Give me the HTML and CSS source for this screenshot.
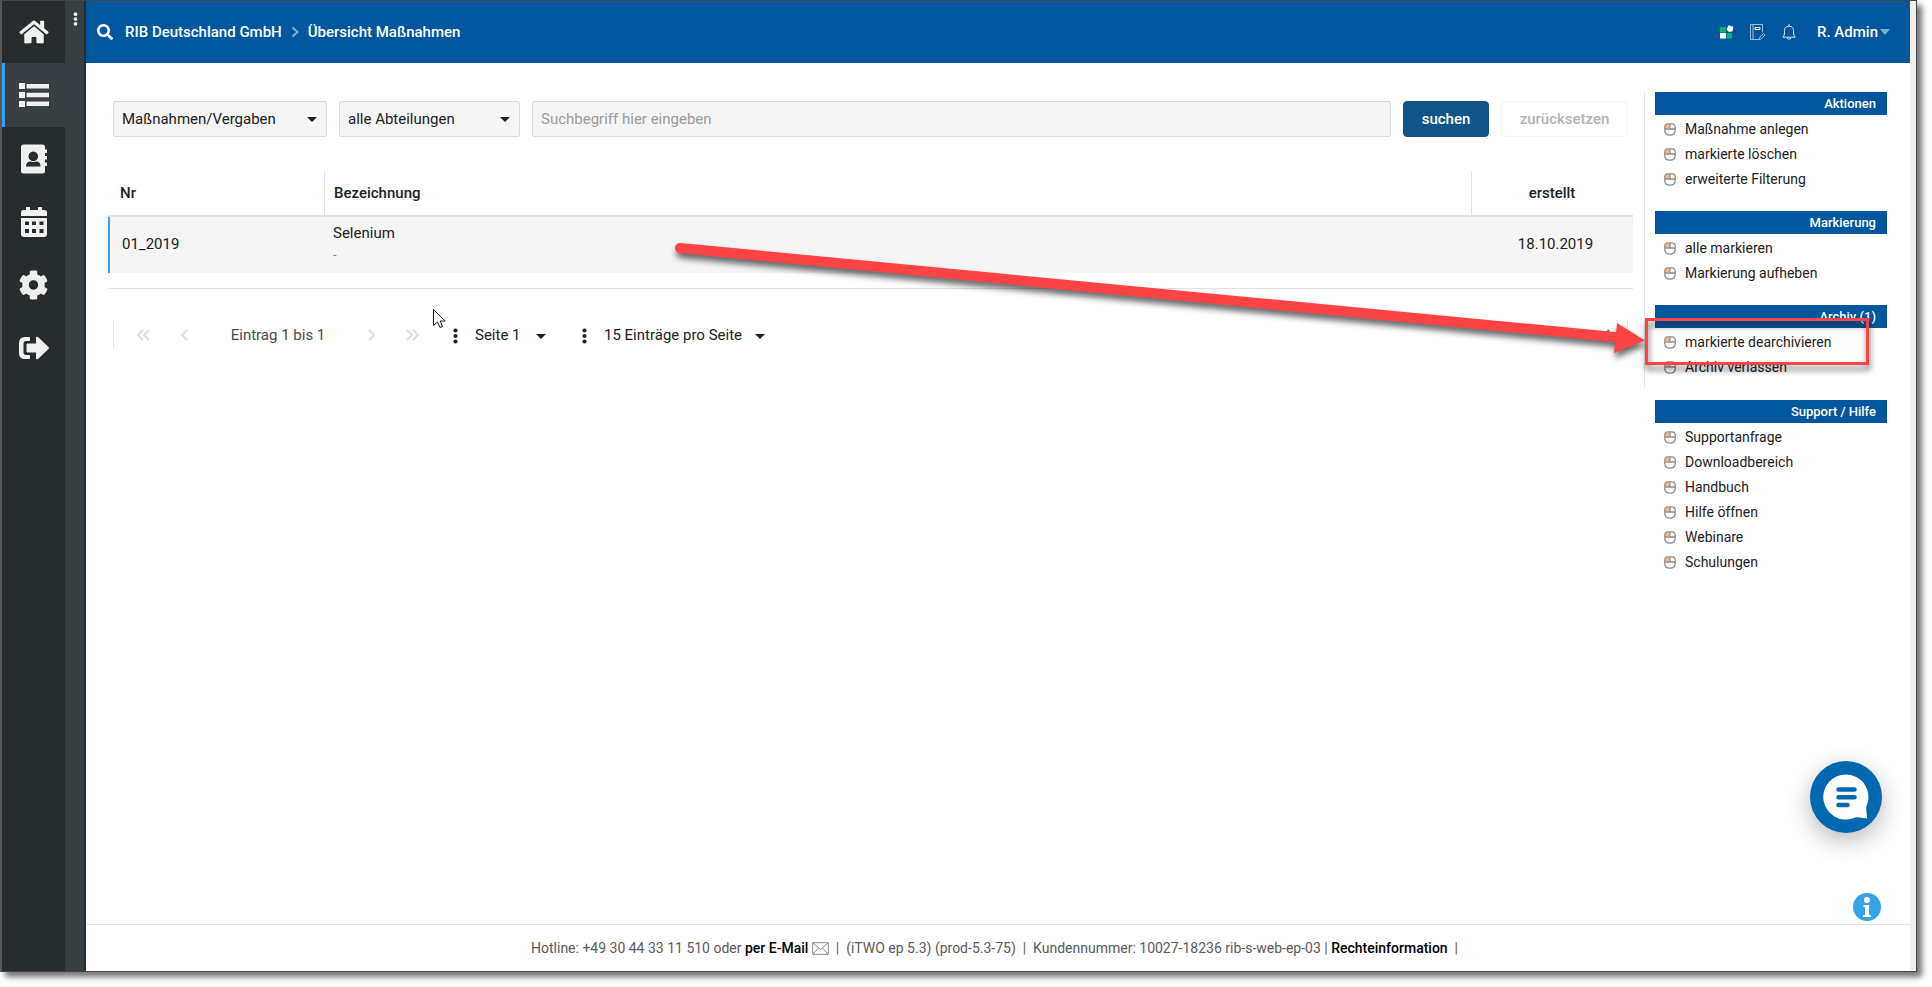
FILE: index.html
```html
<!DOCTYPE html>
<html lang="de">
<head>
<meta charset="utf-8">
<title>Übersicht Maßnahmen</title>
<link rel="stylesheet" href="styles.css">
</head>
<body>
<svg class="defs" aria-hidden="true">
  <symbol id="mouse" viewBox="0 0 12 13"><path d="M1.500 1.500h4v4h-4z" fill="#fdb47c"/><path d="M.8 4Q.8.8 4 .8h4Q11.200.8 11.200 4v3.500Q11.200 12.200 6 12.200T.8 7.500zM.8 6h10.400M6 .8V6" fill="none" stroke="#8c8c8c" stroke-width="1.300"/></symbol>
  <symbol id="dots" viewBox="0 0 5 16"><circle cx="2.500" cy="2.500" r="2.100"/><circle cx="2.500" cy="8" r="2.100"/><circle cx="2.500" cy="13.500" r="2.100"/></symbol>
  <symbol id="left" viewBox="0 0 8 12"><path d="M7 1 2 6l5 5" fill="none" stroke="currentColor" stroke-width="2"/></symbol>
  <symbol id="right" viewBox="0 0 8 12"><path d="m1 1 5 5-5 5" fill="none" stroke="currentColor" stroke-width="2"/></symbol>
  <symbol id="first" viewBox="0 0 14 12"><path d="M7 1 2 6l5 5M13 1 8 6l5 5" fill="none" stroke="currentColor" stroke-width="2"/></symbol>
  <symbol id="last" viewBox="0 0 14 12"><path d="m1 1 5 5-5 5M7 1l5 5-5 5" fill="none" stroke="currentColor" stroke-width="2"/></symbol>
</svg>

<div class="window">
  <nav class="nav" aria-label="Hauptnavigation">
    <a class="nav-item home" href="#" aria-label="Start"><svg width="30" height="26" viewBox="0 0 576 512"><path d="M280.370 148.260L96 300.110V464a16 16 0 0 0 16 16l112.060-.29a16 16 0 0 0 15.920-16V368a16 16 0 0 1 16-16h64a16 16 0 0 1 16 16v95.640a16 16 0 0 0 16 16.050L464 480a16 16 0 0 0 16-16V300L295.670 148.260a12.190 12.190 0 0 0-15.300 0zM571.600 251.470L488 182.560V44.050a12 12 0 0 0-12-12h-56a12 12 0 0 0-12 12v72.610L318.470 43a48 48 0 0 0-61 0L4.340 251.470a12 12 0 0 0-1.600 16.900l25.500 31A12 12 0 0 0 45.150 301l235.220-193.740a12.190 12.190 0 0 1 15.300 0L530.900 301a12 12 0 0 0 16.900-1.600l25.500-31a12 12 0 0 0-1.700-16.930z"/></svg></a>
    <a class="nav-item active" href="#" aria-label="Maßnahmen"><svg width="30" height="26" viewBox="0 0 30 26"><path d="M0 1h6v6H0zM0 10h6v6H0zM0 19h6v6H0zM7.500 2H30v4.500H7.500zM7.500 10.700H30v4.500H7.500zM7.500 19.500H30V24H7.500z"/></svg></a>
    <a class="nav-item" href="#" aria-label="Adressbuch"><svg width="28" height="30" viewBox="0 0 28 30"><path fill-rule="evenodd" d="M3.500.5h19Q25 .5 25 3v2.500h2v3.500h-2v3h2v3.500h-2v3h2V22h-2v5q0 2.500-2.500 2.500h-19Q1 29.500 1 27V3Q1 .5 3.500.5zM13.300 7.500a4.800 4.800 0 1 0 .01 0zM6 22.500h14.500q0-5-4.500-5-2.700 1-5.400 0-4.600 0-4.600 5z"/></svg></a>
    <a class="nav-item" href="#" aria-label="Kalender"><svg width="28" height="30" viewBox="0 0 28 30"><path fill-rule="evenodd" d="M6 0h4v3h8V0h4v3h2.500Q27 3 27 5.500V9H1V5.500Q1 3 3.500 3H6zM1 11h26v16q0 3-3 3H4q-3 0-3-3zM5 14.500v3.500h4v-3.500zM12 14.500v3.500h4v-3.500zM19.500 14.500v3.500h4v-3.500zM5 22v4h4v-4zM12 22v4h4v-4zM19.500 22v4h4v-4z"/></svg></a>
    <a class="nav-item" href="#" aria-label="Einstellungen"><svg width="29" height="30" viewBox="8 4 496 504"><path d="M487.400 315.700l-42.600-24.600c4.300-23.200 4.300-47 0-70.200l42.600-24.600c4.900-2.800 7.100-8.600 5.500-14-11.100-35.600-30-67.800-54.700-94.600-3.800-4.100-10-5.100-14.800-2.300L380.800 110c-17.900-15.400-38.500-27.300-60.800-35.100V25.800c0-5.600-3.900-10.500-9.400-11.700-36.700-8.200-74.300-7.800-109.200 0-5.500 1.200-9.400 6.100-9.400 11.700V75c-22.200 7.900-42.800 19.800-60.800 35.100L88.700 85.500c-4.900-2.800-11-1.900-14.800 2.300-24.700 26.700-43.600 58.900-54.700 94.600-1.700 5.400.6 11.200 5.500 14L67.300 221c-4.300 23.200-4.300 47 0 70.200l-42.600 24.600c-4.900 2.800-7.100 8.600-5.500 14 11.100 35.600 30 67.800 54.700 94.600 3.800 4.100 10 5.100 14.800 2.300l42.600-24.600c17.900 15.400 38.500 27.300 60.800 35.100v49.200c0 5.600 3.900 10.500 9.400 11.700 36.700 8.200 74.300 7.800 109.200 0 5.500-1.200 9.400-6.100 9.400-11.700v-49.200c22.200-7.900 42.800-19.800 60.800-35.100l42.600 24.600c4.900 2.800 11 1.900 14.800-2.300 24.700-26.700 43.600-58.900 54.700-94.600 1.500-5.500-.7-11.300-5.600-14.100zM256 336c-44.100 0-80-35.900-80-80s35.900-80 80-80 80 35.900 80 80-35.900 80-80 80z"/></svg></a>
    <a class="nav-item" href="#" aria-label="Abmelden"><svg width="30" height="24" viewBox="0 0 30 24"><path d="M10 1H6Q0 1 0 7v10q0 6 6 6h4q1 0 1-1v-2q0-1-1-1H7q-2.500 0-2.500-2.500v-9Q4.500 5 7 5h3q1 0 1-1V2q0-1-1-1zM8.500 7.500H17V2q0-2 2-1l10.500 10q.8 1 0 2L19 23q-2 1-2-1v-5.500H8.500q-1 0-1-1v-7q0-1 1-1z"/></svg></a>
  </nav>
  <div class="rail"><button class="rail-btn" type="button" aria-label="Menü"><svg width="5" height="14"><use href="#dots"/></svg></button></div>

  <div class="page">
    <header class="topbar">
      <svg class="search" width="16" height="16" viewBox="0 0 512 512"><path d="M505 442.700L405.300 343c-4.500-4.500-10.600-7-17-7H372c27.600-35.300 44-79.700 44-128C416 93.100 322.900 0 208 0S0 93.100 0 208s93.100 208 208 208c48.300 0 92.700-16.400 128-44v16.300c0 6.400 2.500 12.500 7 17l99.700 99.700c9.400 9.400 24.600 9.400 33.900 0l28.300-28.300c9.400-9.400 9.400-24.600.1-34zM208 336c-70.700 0-128-57.200-128-128 0-70.700 57.200-128 128-128 70.700 0 128 57.200 128 128 0 70.700-57.200 128-128 128z"/></svg>
      <a href="#">RIB Deutschland GmbH</a>
      <svg class="crumb" width="8" height="12" viewBox="0 0 8 12"><path d="m1.500 1.500 5 4.500-5 4.500"/></svg>
      <a href="#">Übersicht Maßnahmen</a>
      <div class="tools">
        <svg width="14" height="14" viewBox="0 0 14 14"><path d="M0 2h6v5.500H0zM6.500 8H12v5.500H6.500z" fill="#0ab463"/><path d="M0 8h6v5.500H0zM6.500 4.500 8.500.3l5 1.500-1 4.500-3.500.7z" fill="#fff"/></svg>
        <svg width="16" height="17" viewBox="0 0 16 17" fill="none" stroke="#9fc0dc"><path d="M9 15.500H.5V.5h12v8M3 .5v15"/><path d="M5 3.500h5v2H5z" stroke="#fff"/><path d="m9.500 13.500 4-4 1.500 1.500-4 4-2 .5z"/></svg>
        <svg width="14" height="16" viewBox="0 0 14 16" fill="none" stroke="#d5e3ef"><path d="M.8 13.200h12.400Q11.500 11.500 11.500 9V6.500Q11.500 2.500 7 2.200 2.500 2.500 2.500 6.500V9q0 2.500-1.700 4.200zM7 0v2M5 14.300q2 2 4 0"/></svg>
        <button class="user" type="button">R. Admin</button>
      </div>
    </header>

    <div class="content">
      <main class="main">
        <form class="filters">
          <div class="select wide"><select aria-label="Bereich"><option>Maßnahmen/Vergaben</option></select></div>
          <div class="select"><select aria-label="Abteilung"><option>alle Abteilungen</option></select></div>
          <input class="term" type="text" aria-label="Suchbegriff" placeholder="Suchbegriff hier eingeben">
          <button class="btn primary" type="button">suchen</button>
          <button class="btn" type="button">zurücksetzen</button>
        </form>

        <div class="table-wrap">
          <table class="table">
            <thead><tr><th class="nr">Nr</th><th>Bezeichnung</th><th class="date">erstellt</th></tr></thead>
            <tbody><tr><td class="nr">01_2019</td><td class="name">Selenium<span class="sub">-</span></td><td class="date">18.10.2019</td></tr></tbody>
          </table>
        </div>

        <div class="pager">
          <button class="page-btn first" type="button" aria-label="Erste Seite"><svg width="14" height="12"><use href="#first"/></svg></button>
          <button class="page-btn" type="button" aria-label="Vorherige Seite"><svg width="8" height="12"><use href="#left"/></svg></button>
          <span class="range">Eintrag 1 bis 1</span>
          <button class="page-btn" type="button" aria-label="Nächste Seite"><svg width="8" height="12"><use href="#right"/></svg></button>
          <button class="page-btn last" type="button" aria-label="Letzte Seite"><svg width="14" height="12"><use href="#last"/></svg></button>
          <svg class="dots" width="5" height="16"><use href="#dots"/></svg>
          <div class="picker number"><select aria-label="Seite"><option>Seite 1</option></select></div>
          <svg class="dots" width="5" height="16"><use href="#dots"/></svg>
          <div class="picker size"><select aria-label="Einträge pro Seite"><option>15 Einträge pro Seite</option></select></div>
          <svg class="check" width="14" height="12" viewBox="0 0 14 12"><path d="m1 6 4 4 8-9"/></svg>
        </div>
      </main>

      <aside class="side">
        <div class="ruled">
        <section><h2>Aktionen</h2><ul>
          <li><a href="#"><svg><use href="#mouse"/></svg>Maßnahme anlegen</a></li>
          <li><a href="#"><svg><use href="#mouse"/></svg>markierte löschen</a></li>
          <li><a href="#"><svg><use href="#mouse"/></svg>erweiterte Filterung</a></li>
        </ul></section>
        <section><h2>Markierung</h2><ul>
          <li><a href="#"><svg><use href="#mouse"/></svg>alle markieren</a></li>
          <li><a href="#"><svg><use href="#mouse"/></svg>Markierung aufheben</a></li>
        </ul></section>
        <section><h2>Archiv (1)</h2><ul>
          <li><a href="#"><svg><use href="#mouse"/></svg>markierte dearchivieren</a></li>
          <li><a href="#"><svg><use href="#mouse"/></svg>Archiv verlassen</a></li>
        </ul></section>
        </div>
        <section><h2>Support / Hilfe</h2><ul>
          <li><a href="#"><svg><use href="#mouse"/></svg>Supportanfrage</a></li>
          <li><a href="#"><svg><use href="#mouse"/></svg>Downloadbereich</a></li>
          <li><a href="#"><svg><use href="#mouse"/></svg>Handbuch</a></li>
          <li><a href="#"><svg><use href="#mouse"/></svg>Hilfe öffnen</a></li>
          <li><a href="#"><svg><use href="#mouse"/></svg>Webinare</a></li>
          <li><a href="#"><svg><use href="#mouse"/></svg>Schulungen</a></li>
        </ul></section>
      </aside>
    </div>

    <footer class="footer">
      <p>Hotline: +49 30 44 33 11 510 oder <a href="#">per E-Mail</a> <svg width="17" height="13" viewBox="0 0 17 13"><path d="M.7.7h15.600v11.600H.7zM1 1l7.500 6.500L16 1M1 12l5.500-6M16 12l-5.500-6"/></svg> &nbsp;|&nbsp; (iTWO ep 5.3) (prod-5.3-75) &nbsp;|&nbsp; Kundennummer: 10027-18236 rib-s-web-ep-03 | <a href="#">Rechteinformation</a> &nbsp;|&nbsp;&nbsp;</p>
    </footer>

    <button class="chat" type="button" aria-label="Chat"><svg width="46" height="46" viewBox="0 0 46 46"><path d="M23 .5a22.500 22.500 0 0 1 20.300 32q-.3 4 1 12-4-.3-9-1.300-3-.3-5 1A22.500 22.500 0 1 1 23 .5z" fill="#fff"/><path d="M15.500 15.500h16M15.500 23.300h16M15.500 31h9" stroke="#0067b1" stroke-width="4.500" stroke-linecap="round"/></svg></button>
    <button class="info" type="button" aria-label="Information"><svg width="28" height="28" viewBox="0 0 28 28"><circle cx="14" cy="14" r="14" fill="#36a3e5"/><circle cx="14" cy="7" r="3" fill="#fff"/><path d="M10.500 12H16v10h2v2h-8v-2h2v-8h-1.500z" fill="#fff"/></svg></button>
  </div>
  <div class="gutter"></div>

  <svg class="overlay" width="1916" height="972" viewBox="0 0 1916 972" aria-hidden="true">
    <g class="mark">
      <path d="M680 248 1620 337.500" stroke-width="10" stroke-linecap="round"/>
      <path d="m1617 323 28 17.500-31 12.500z" fill="#fd4343" stroke="none"/>
      <path d="M1646.500 319.500h221v44h-221z" stroke-width="3"/>
    </g>
    <path d="M433.500 309.500v16l4-3.500 2.500 5.500 2.500-1-2.300-5.500h5z" fill="#fff" stroke="#14141f"/>
  </svg>
</div>
</body>
</html>
```
FILE: styles.css
```css
* { box-sizing: border-box; }
body {
  margin: 0;
  height: 100vh;
  padding: 0 15px 15px 0;
  background: #fff;
  color: #212121;
  font: 15px/20px Roboto, sans-serif;
}
a { color: inherit; text-decoration: none; }
button, select, input { font: inherit; color: inherit; margin: 0; }
button { padding: 0; border: 0; background: none; cursor: pointer; }
svg { display: block; flex: none; }
.defs { position: absolute; width: 0; height: 0; }

.window {
  position: relative;
  display: flex;
  height: 100%;
  border: 1px solid #444749;
  border-left: 2px solid #55595b;
  background: #fff;
  box-shadow: 5px 5px 6px rgba(0, 0, 0, .55);
}
.nav { width: 63px; background: #272c2f; }
.nav-item {
  display: flex;
  align-items: center;
  justify-content: center;
  height: 63px;
  fill: #f0f0f0;
}
.nav-item.home { height: 62px; }
.nav-item.active {
  height: 64px;
  border-left: 3px solid #36a3e5;
  padding-right: 3px;
  background: #383f42;
}
.rail {
  width: 21px;
  border-right: 2px solid #272c2f;
  background: #383f42;
}
.rail-btn { display: block; margin: 11px 0 0 8px; fill: #f0f0f0; }

.page {
  position: relative;
  flex: 1;
  display: flex;
  flex-direction: column;
  min-width: 0;
}
.gutter { width: 6px; background: #f0f0f0; }
.topbar {
  display: flex;
  align-items: center;
  height: 62px;
  padding: 0 20px 0 11px;
  background: #00579d;
  color: #fff;
  font-weight: 500;
}
.search { margin-right: 12px; fill: #fff; }
.crumb { margin: 0 9px; fill: none; stroke: #7fabce; stroke-width: 2; }
.tools { display: flex; align-items: center; gap: 16px; margin-left: auto; }
.user { display: flex; align-items: center; gap: 2px; margin-left: 5px; font-weight: 500; }
.user::after {
  content: "";
  border: 5px solid transparent;
  border-top: 6px solid #7fabce;
  border-bottom: 0;
}

.content { flex: 1; display: flex; min-height: 0; padding: 29px 23px 0 22px; }
.main { flex: 1; min-width: 0; padding-right: 11px; }
.filters { display: flex; gap: 12px; padding: 9px 5px 0; }
.select { position: relative; width: 181px; }
.select.wide { width: 214px; }
.select select, .term {
  width: 100%;
  height: 36px;
  padding: 0 8px;
  border: 1px solid #dcdcdc;
  border-radius: 2px;
  background: #f5f5f5;
  appearance: none;
}
.select::after, .picker::after {
  content: "";
  position: absolute;
  right: 10px;
  top: 16px;
  border: 5px solid transparent;
  border-top-color: #212121;
  border-bottom: 0;
  pointer-events: none;
}
.term { flex: 1; min-width: 0; }
.term::placeholder { color: #9b9b9b; }
.btn {
  width: 127px;
  height: 36px;
  border: 1px solid #f5f5f5;
  border-radius: 4px;
  color: #b4b4b4;
  font-weight: 500;
}
.btn.primary { width: 86px; border-color: #115487; background: #115487; color: #fff; }

.table-wrap { margin-top: 34px; padding-bottom: 15px; border-bottom: 1px solid #e2e2e2; }
.table { width: 100%; border-collapse: separate; border-spacing: 0; table-layout: fixed; }
.table th {
  height: 46px;
  padding: 0 9px;
  border-bottom: 2px solid #e2e2e2;
  font-weight: 500;
  text-align: left;
}
.table th + th { border-left: 1px solid #e2e2e2; }
.table td { height: 56px; padding: 0 9px 2px; background: #f5f5f5; }
.table .nr { width: 216px; padding-left: 12px; }
.table td.nr { border-left: 2px solid #36a3e5; }
.table .date { width: 162px; padding-left: 8px; text-align: center; }
.table td.date { padding-left: 16px; }
.table .sub { display: block; margin-top: 2px; color: #8a8a8a; font-size: 13px; }

.pager {
  display: flex;
  align-items: center;
  height: 29px;
  margin: 31px 5px 0;
  padding: 0 17px;
  border: solid #e2e2e2;
  border-width: 0 1px;
}
.page-btn { display: flex; justify-content: center; width: 40px; color: #dedede; }
.page-btn.first, .page-btn.last { width: 24px; }
.page-btn.first { margin-right: 9px; }
.page-btn.last { margin-left: 9px; }
.range { width: 148px; text-align: center; color: #4a4a4a; }
.dots { margin: 2px 17px 0 28px; fill: #212121; }
.picker { position: relative; width: 79px; }
.picker.size { width: 169px; }
.picker::after { right: 8px; top: 9px; }
.picker select { width: 100%; padding: 0; border: 0; background: none; appearance: none; }
.check { margin-left: auto; fill: none; stroke: #0aa85c; stroke-width: 2; }

.side { width: 243px; }
.side > section { padding-left: 11px; }
.ruled { margin-bottom: 12px; padding-left: 10px; border-left: 1px solid #e6e6e6; }
.side h2 {
  margin: 0;
  padding: 0 11px;
  background: #00579d;
  color: #fff;
  font-size: 13px;
  font-weight: 500;
  line-height: 23px;
  text-align: right;
}
.side ul { margin: 0; padding: 2px 0 19px; list-style: none; }
.ruled section:last-child ul { padding-bottom: 8px; }
.side a { display: flex; align-items: center; gap: 9px; padding-left: 9px; font-size: 14px; line-height: 25px; }
.side a svg { width: 12px; height: 13px; }

.footer {
  border-top: 1px solid #e2e2e2;
  color: #5a5a5a;
  font-size: 14px;
  text-align: center;
}
.footer p { margin: 0; padding: 13px 0; }
.footer a { color: #000; font-weight: 500; }
.footer svg { display: inline-block; vertical-align: -2px; fill: none; stroke: #8a8a8a; }

.chat {
  position: absolute;
  right: 28px;
  bottom: 138px;
  display: grid;
  place-items: center;
  width: 72px;
  height: 72px;
  border-radius: 50%;
  background: #0067b1;
  box-shadow: 0 8px 24px rgba(0, 0, 0, .28);
}
.info { position: absolute; right: 29px; bottom: 50px; }

.overlay { position: absolute; left: -2px; top: -1px; pointer-events: none; }
.mark { fill: none; stroke: #fd4343; filter: drop-shadow(1px 5px 3px rgba(0, 0, 0, .6)); }
```
